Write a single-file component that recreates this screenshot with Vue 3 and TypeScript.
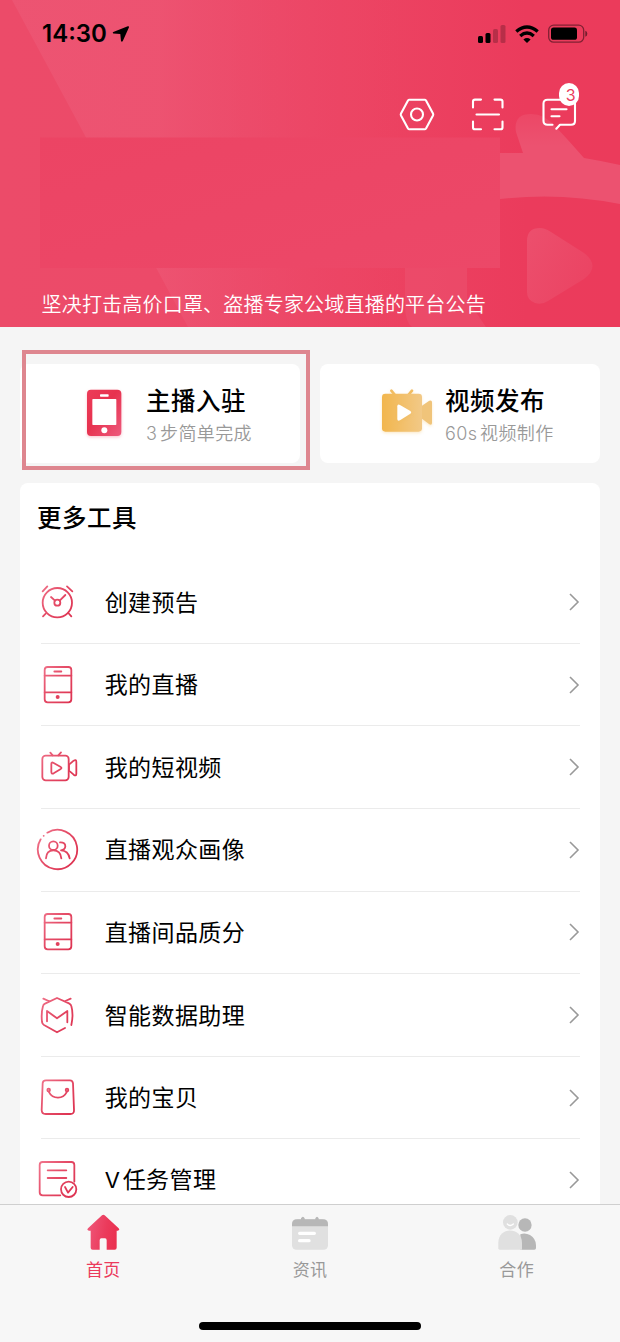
<script setup lang="ts">
type IconName = 'clock' | 'phone' | 'video' | 'users' | 'assistant' | 'bag' | 'task'

interface Tool {
  label: string
  icon: IconName
  prefix?: string
}

const tools: Tool[] = [
  { label: '创建预告', icon: 'clock' },
  { label: '我的直播', icon: 'phone' },
  { label: '我的短视频', icon: 'video' },
  { label: '直播观众画像', icon: 'users' },
  { label: '直播间品质分', icon: 'phone' },
  { label: '智能数据助理', icon: 'assistant' },
  { label: '我的宝贝', icon: 'bag' },
  { label: '任务管理', icon: 'task', prefix: 'V' },
]
</script>

<template>
  <div class="screen">
    <header class="hero">
      <svg class="hero-art" viewBox="0 0 620 327" aria-hidden="true">
        <defs>
          <linearGradient id="beam" gradientUnits="userSpaceOnUse" x1="12" y1="0" x2="400" y2="0">
            <stop offset="0" stop-color="#ed5674" stop-opacity=".8" />
            <stop offset=".38" stop-color="#ed5573" stop-opacity=".78" />
            <stop offset=".8" stop-color="#ec4868" stop-opacity=".4" />
            <stop offset="1" stop-color="#ec4565" stop-opacity="0" />
          </linearGradient>
          <linearGradient id="lens" x1="0" y1="0" x2="1" y2="0.6">
            <stop offset="0" stop-color="#ec4f6d" />
            <stop offset="1" stop-color="#eb4463" />
          </linearGradient>
          <linearGradient id="panel" x1="0" y1="0" x2="1" y2="1">
            <stop offset="0" stop-color="#ec4464" />
            <stop offset="1" stop-color="#ec4868" />
          </linearGradient>
          <linearGradient id="torso" x1="0" y1="0" x2="0" y2="1">
            <stop offset="0" stop-color="#ec4766" />
            <stop offset=".35" stop-color="#ec5270" />
          </linearGradient>
          <linearGradient id="iconStroke" gradientUnits="userSpaceOnUse" x1="15" y1="20" x2="115" y2="90">
            <stop offset="0" stop-color="#ef7088" />
            <stop offset=".45" stop-color="#e54d68" />
            <stop offset="1" stop-color="#de3553" />
          </linearGradient>
        </defs>
        <path d="M12 0H430V327H188Z" fill="url(#beam)" />
        <path d="M405 260H467V299L486 327H412Q405 322 405 306Z" fill="#ec5472" opacity=".5" />
        <path d="M500 153H523L516 132Q513 114 531 114Q545 114 556 127Q570 142 584 158Q602 161 620 165V204Q560 192 500 199Z" fill="url(#torso)" />
        <path d="M527 241Q527 228 540 228Q545 228 551 232L584 253Q601 266 584 279L548 301Q542 305 535 303Q527 300 527 292Z" fill="url(#lens)" />
        <rect x="40" y="137.500" width="460" height="130.500" fill="url(#panel)" />
      </svg>

      <div class="status">
        <div class="status-side">
          <span class="time">14:30</span>
          <svg class="locate" viewBox="0 0 18 18"><path d="M15.800 1.300L1.300 6.900Q.1 7.700 1.300 8.400L8.300 8.900L9 16Q9.800 17.500 10.800 16L17 2.300Q17.200 .9 15.800 1.300Z" /></svg>
        </div>
        <div class="status-side">
          <svg width="28" height="18" viewBox="0 0 28 18">
            <rect x="0" y="11" width="5" height="7" rx="1.500" />
            <rect x="7.500" y="8" width="5" height="10" rx="1.500" />
            <rect x="15" y="4" width="5" height="14" rx="1.500" opacity=".22" />
            <rect x="22.500" y="0" width="5" height="18" rx="1.500" opacity=".22" />
          </svg>
          <svg class="wifi" width="24" height="19" viewBox="0 0 24 19" fill="none" stroke="#000" stroke-width="3.300">
            <path d="M1.300 6.500Q12 -2.500 22.700 6.500" />
            <path d="M5.200 10.900Q12 5.200 18.800 10.900" />
            <path d="M8.400 14.500Q12 11.600 15.600 14.500L12 18Z" fill="#000" stroke="none" />
          </svg>
          <svg class="battery" width="40" height="20" viewBox="0 0 40 20">
            <rect x=".7" y="1.200" width="35" height="17" rx="5" fill="none" stroke="#000" stroke-opacity=".45" stroke-width="1.300" />
            <rect x="3" y="3.600" width="26" height="12.200" rx="2.600" />
            <path d="M37.300 6.800Q39.300 7.500 39.300 9.800T37.300 12.800Z" opacity=".5" />
          </svg>
        </div>
      </div>

      <nav class="actions">
        <svg width="36" height="36" viewBox="0 0 36 36" class="line-icon">
          <path d="M10.300 2.700H25.700Q26.500 2.700 27 3.500L34 16.500Q34.500 17.500 34 18.500L27 31.500Q26.500 32.300 25.700 32.300H10.300Q9.500 32.300 9 31.500L2 18.500Q1.500 17.500 2 16.500L9 3.500Q9.500 2.700 10.300 2.700Z" />
          <circle cx="18" cy="17.500" r="6" />
        </svg>
        <svg width="36" height="36" viewBox="0 0 36 36" class="line-icon">
          <path d="M3 10.500V4.500Q3 2.600 5 2.600H11M24.500 2.600H30.500Q32.500 2.600 32.500 4.500V10.500M3 24.500V30.400Q3 32.200 5 32.200H11M24.500 32.200H30.500Q32.500 32.200 32.500 30.400V24.500M6.500 17.500H29" />
        </svg>
        <div class="message">
          <svg width="36" height="36" viewBox="0 0 36 36" class="line-icon">
            <path d="M11.500 27.800H6.500Q2.500 27.800 2.500 24V6.500Q2.500 2.700 6.500 2.700H30Q34 2.700 34 6.500V24Q34 27.800 30 27.800H19L15.300 31.700M10.500 12.300H25.500M10.500 19.200H18.500" />
          </svg>
          <span class="badge">3</span>
        </div>
      </nav>

      <p class="notice">坚决打击高价口罩、盗播专家公域直播的平台公告</p>
    </header>

    <main class="content">
      <section class="shortcuts">
        <article class="shortcut">
          <svg class="shortcut-icon" width="52" height="60" viewBox="0 0 156 180">
            <defs>
              <linearGradient id="phoneFill" x1="0" y1="0" x2="1" y2="1">
                <stop offset="0" stop-color="#ec3c58" /><stop offset=".45" stop-color="#e7324f" /><stop offset="1" stop-color="#ed5a7d" />
              </linearGradient>
            </defs>
            <rect x="24" y="20" width="103" height="139" rx="12" fill="url(#phoneFill)" class="red-shadow" />
            <rect x="40" y="48" width="72" height="78" rx="2" fill="#fff" />
            <rect x="63" y="34" width="26" height="7" rx="2" fill="#fff" />
            <circle cx="76" cy="142" r="9" fill="#fff" />
          </svg>
          <div class="shortcut-text">
            <h3>主播入驻</h3>
            <p><span class="latin three">3</span>步简单完成</p>
          </div>
        </article>
        <article class="shortcut second">
          <svg class="shortcut-icon" width="56" height="60" viewBox="0 0 168 180">
            <defs>
              <linearGradient id="cameraFill" x1="0" y1="0" x2="1" y2="0">
                <stop offset="0" stop-color="#f2b64d" /><stop offset="1" stop-color="#f2c987" />
              </linearGradient>
            </defs>
            <g class="gold-shadow">
              <path d="M40 23L51 36M102 23L91 36" stroke="#f2bd61" stroke-width="8" stroke-linecap="round" />
              <rect x="12" y="32" width="120" height="114" rx="10" fill="url(#cameraFill)" />
              <path d="M132 68L154 53Q162 50 162 58V120Q162 128 154 124L132 107Z" fill="#f0c47a" />
            </g>
            <path d="M58 70Q58 62 66 66L97 84Q102 88 97 92L66 112Q58 116 58 108Z" fill="#fff" class="gold-shadow" />
          </svg>
          <div class="shortcut-text">
            <h3>视频发布</h3>
            <p><span class="latin sixty">60s</span>视频制作</p>
          </div>
        </article>
        <div class="highlight"></div>
      </section>

      <section class="tools">
        <h2>更多工具</h2>
        <ul>
          <li v-for="tool in tools" :key="tool.label">
            <svg class="tool-icon" viewBox="0 0 132 132">
              <g v-if="tool.icon === 'clock'">
                <circle cx="64" cy="68" r="44" /><circle cx="64" cy="68" r="9" />
                <path d="M20 34L34 19M93 19L109 34M29 101L21 109M97 99L106 109M45 51L57 62M88 45L71 62" />
              </g>
              <g v-else-if="tool.icon === 'phone'">
                <rect x="26" y="12" width="80" height="106" rx="9" />
                <path d="M26 38H106M26 88H106M55 25.500H76" /><circle cx="65" cy="102" r="3" stroke-width="6" />
              </g>
              <g v-else-if="tool.icon === 'video'">
                <rect x="19" y="32" width="79" height="74" rx="10" />
                <path d="M43 23L50 31M75 22L67 31M99 59L113 47Q121 42 121 51V86Q121 95 113 89L99 77ZM46 57Q46 50 53 54L73 65Q80 69 73 73L53 85Q46 88 46 80Z" />
              </g>
              <g v-else-if="tool.icon === 'users'">
                <path d="M34 14A59 59 0 1 1 14 34M23 23.500H23.200" /><circle cx="52" cy="53" r="13" />
                <path d="M30 91Q31 67 52 67Q74 67 76 91M72 43Q88 42 88 55Q87 65 75 67Q97 68 101 91" />
              </g>
              <g v-else-if="tool.icon === 'assistant'">
                <path d="M87 105L63 118L24 96Q19 93 18 87Q15 60 21 39Q22 34 27 32L63 15L99 31Q105 34 106 39Q113 64 106 96M33 85V54L63 76L94 54V88M22 17L38 24M104 17L88 24" />
              </g>
              <g v-else-if="tool.icon === 'bag'">
                <path d="M30 13H102Q110 13 111 22L114 102Q115 114 103 114H29Q17 114 17 102L20 22Q20 13 30 13Z" />
                <circle cx="38" cy="42" r="4" /><circle cx="93" cy="42" r="4" />
                <path d="M38 47Q47 65 66 65Q84 65 93 47" />
              </g>
              <g v-else>
                <path d="M73 112H20Q11 112 11 103V21Q11 12 20 12H106Q115 12 115 21V71M35 37H91M35 60H91" />
                <circle cx="98" cy="94" r="23" /><path d="M87 87L96 104L110 87" />
              </g>
            </svg>
            <span class="tool-label"><span v-if="tool.prefix" class="prefix">{{ tool.prefix }}</span>{{ tool.label }}</span>
            <svg class="chevron" viewBox="0 0 12 20"><path d="M2 2L10 10L2 18" /></svg>
          </li>
        </ul>
      </section>
    </main>

    <footer class="dock">
      <div class="tabs">
        <div class="tab active">
          <svg width="40" height="40" viewBox="0 0 120 120">
            <defs>
              <linearGradient id="homeFill" x1="0" y1="0" x2="1" y2=".2">
                <stop offset="0" stop-color="#ef5a7c" /><stop offset=".65" stop-color="#eb3a5b" /><stop offset="1" stop-color="#ea3150" />
              </linearGradient>
            </defs>
            <path d="M57 7Q61 4 65 7L107 46Q112 52 104 53H101V104Q101 110 95 110H71V82Q71 76 66 76H55Q50 76 50 82V110H29Q23 110 23 104V53H18Q10 52 15 46Z" fill="url(#homeFill)" />
          </svg>
          <span>首页</span>
        </div>
        <div class="tab">
          <svg width="40" height="40" viewBox="0 0 120 120">
            <rect x="6" y="19" width="108" height="91" rx="13" fill="#e0e0e0" />
            <path d="M6 40V34Q6 19 22 19H33V16Q39 7 44 16V19H76V16Q81 7 86 16V19H98Q114 19 114 34V40Z" fill="#b7b7b7" />
            <path d="M29 61H73M29 83H57" stroke="#fff" stroke-width="10" stroke-linecap="round" />
          </svg>
          <span>资讯</span>
        </div>
        <div class="tab">
          <svg width="40" height="40" viewBox="0 0 120 120">
            <circle cx="84" cy="36" r="20" fill="#b7b7b7" />
            <path d="M70 64Q84 58 99 66Q117 77 117 97V105Q117 110 112 110H70Z" fill="#b7b7b7" />
            <circle cx="40" cy="28" r="22" fill="#e0e0e0" />
            <path d="M4 106V89C4 40 75 40 75 89V110H8Q4 110 4 106Z" fill="#e0e0e0" />
            <path d="M31 33Q39 42 49 33" fill="none" stroke="#fff" stroke-width="4" stroke-linecap="round" />
          </svg>
          <span>合作</span>
        </div>
      </div>
      <div class="home-indicator"></div>
    </footer>
  </div>
</template>

<style>
body {
  margin: 0;
}
</style>

<style scoped>
.screen {
  width: 620px;
  height: 1342px;
  display: flex;
  flex-direction: column;
  overflow: hidden;
  background: #f5f5f5;
  color: #000;
  font-family: "Noto Sans CJK SC", sans-serif;
}
h2, h3, p, ul {
  margin: 0;
  padding: 0;
}
svg {
  display: block;
  flex: none;
}
.hero {
  position: relative;
  height: 327px;
  flex: none;
  display: flex;
  flex-direction: column;
  background: linear-gradient(90deg, #ec4b69 0%, #ec4a69 25%, #ec4362 60%, #eb3b5c 85%, #eb3b5b 100%);
}
.hero-art {
  position: absolute;
  inset: 0;
  width: 620px;
  height: 327px;
}
.status {
  position: relative;
  height: 68px;
  box-sizing: border-box;
  padding: 0 32px 0 42px;
  display: flex;
  justify-content: space-between;
  align-items: center;
}
.status-side {
  display: flex;
  align-items: center;
}
.time {
  width: 65px;
  font: 600 24px/30px Inter, sans-serif;
  white-space: nowrap;
}
.locate {
  width: 18px;
  height: 18px;
  margin-left: 5px;
}
.wifi {
  margin-left: 9px;
}
.battery {
  margin-left: 9px;
}
.actions {
  position: relative;
  display: flex;
  justify-content: flex-end;
  gap: 35px;
  padding: 29px 43.500px 0 0;
}
.line-icon {
  fill: none;
  stroke: #fff;
  stroke-width: 2.1;
  stroke-linecap: round;
  stroke-linejoin: round;
}
.message {
  position: relative;
}
.badge {
  position: absolute;
  left: 18px;
  top: -14px;
  width: 20.500px;
  height: 23px;
  box-sizing: border-box;
  padding-left: 4px;
  border-radius: 10px;
  background: #fff;
  color: #eb3b5c;
  font: 400 16px/24px Inter, sans-serif;
  text-align: center;
}
.notice {
  position: relative;
  margin: auto 0 8px 41.500px;
  color: #fff;
  font-size: 20px;
  line-height: 30px;
  font-weight: 350;
  letter-spacing: .2px;
  white-space: nowrap;
}
.content {
  flex: 1;
  min-height: 0;
  overflow: hidden;
  padding: 37px 20px 0;
}
.shortcuts {
  position: relative;
  display: flex;
  gap: 20px;
  height: 99px;
}
.shortcut {
  width: 280px;
  box-sizing: border-box;
  padding-left: 59px;
  display: flex;
  border-radius: 8px;
  background: #fff;
}
.shortcut-icon {
  margin-top: 19px;
}
.shortcut-text {
  margin: 19px 0 0 15px;
  white-space: nowrap;
}
.second {
  padding-left: 58px;
}
.second .shortcut-text {
  margin-left: 11px;
}
.shortcut h3,
.tools h2 {
  font-size: 24.500px;
  font-weight: 500;
  line-height: 34px;
  letter-spacing: .5px;
}
.shortcut p {
  color: #999;
  font-size: 18px;
  line-height: 30px;
  font-weight: 350;
  letter-spacing: .4px;
}
.latin {
  display: inline-block;
  font-family: Inter, sans-serif;
}
.three {
  width: 14px;
}
.sixty {
  width: 35px;
}
.red-shadow {
  filter: drop-shadow(0 4px 5px rgb(236 70 100 / 30%));
}
.gold-shadow {
  filter: drop-shadow(0 4px 5px rgb(242 182 77 / 30%));
}
.highlight {
  position: absolute;
  left: 2px;
  top: -14px;
  width: 288px;
  height: 120px;
  box-sizing: border-box;
  border: 4px solid #de868f;
}
.tools {
  margin-top: 20px;
  height: 760px;
  border-radius: 8px 8px 0 0;
  background: #fff;
}
.tools h2 {
  height: 61.300px;
  padding: 17px 0 0 17px;
}
.tools ul {
  list-style: none;
  padding: 0 20px 0 21px;
}
.tools li {
  height: 82.600px;
  box-sizing: border-box;
  display: flex;
  align-items: center;
  border-bottom: 1.500px solid #ebebeb;
}
.tool-icon {
  width: 44px;
  height: 44px;
  margin-left: -5px;
  fill: none;
  stroke: url(#iconStroke);
  stroke-width: 5.4;
  stroke-linecap: round;
  stroke-linejoin: round;
}
.tool-label {
  flex: 1;
  margin: -3px 0 0 24.700px;
  font-size: 23px;
  line-height: 34px;
  letter-spacing: .4px;
}
.prefix {
  display: inline-block;
  width: 18px;
  font-family: Inter, sans-serif;
  font-size: 22px;
}
.chevron {
  width: 12px;
  height: 20px;
  fill: none;
  stroke: #999;
  stroke-width: 1.6;
}
.dock {
  height: 138px;
  flex: none;
  box-sizing: border-box;
  border-top: 1px solid #cfcfcf;
  background: #f7f7f7;
  display: flex;
  flex-direction: column;
  align-items: center;
}
.tabs {
  width: 620px;
  display: grid;
  grid-template-columns: repeat(3, 1fr);
}
.tab {
  height: 117px;
  padding-top: 8px;
  box-sizing: border-box;
  display: flex;
  flex-direction: column;
  align-items: center;
  color: #999;
  font-size: 17px;
  line-height: 24px;
  letter-spacing: .3px;
}
.tab span {
  margin-top: 4px;
}
.tab.active {
  color: #eb3b5c;
}
.home-indicator {
  width: 222px;
  height: 8px;
  border-radius: 4px;
  background: #000;
}
</style>
